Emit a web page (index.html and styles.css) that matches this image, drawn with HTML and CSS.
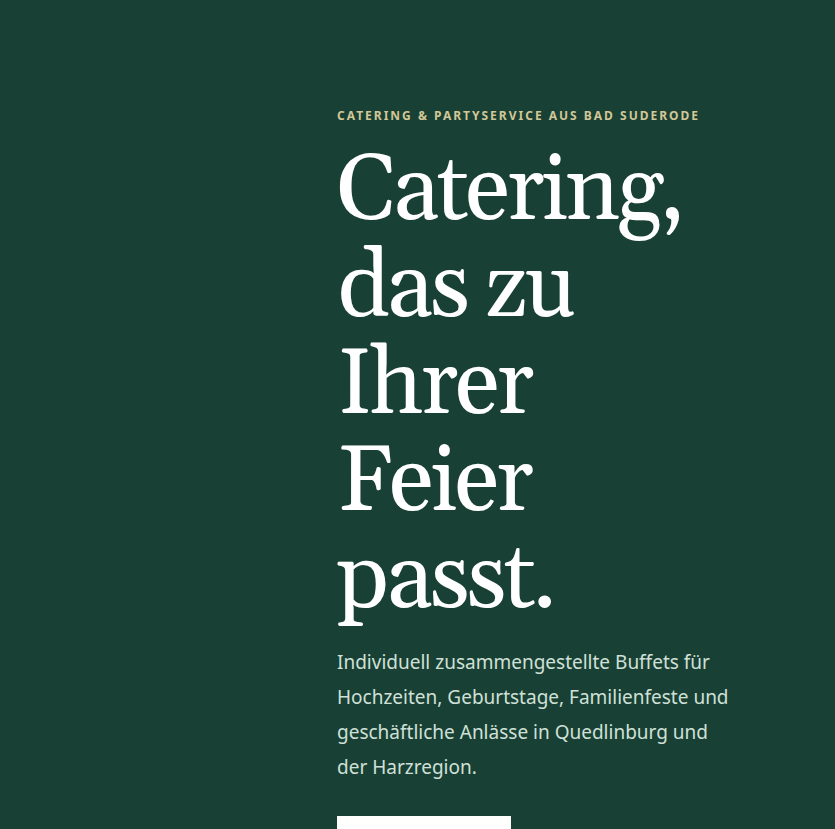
FILE: index.html
```
<!DOCTYPE html>
<html lang="de">
<head>
    <meta charset="UTF-8">
    <meta name="viewport" content="width=device-width, initial-scale=1.0">
    <title>Catering &amp; Partyservice</title>
    <link rel="stylesheet" href="styles.css">
</head>
<body>
    <main class="hero">
        <div class="hero-content">
            <p class="eyebrow">Catering &amp; Partyservice aus Bad Suderode</p>
            <h1 class="hero-title">Catering, das zu Ihrer Feier passt.</h1>
            <p class="hero-text">Individuell zusammengestellte Buffets für Hochzeiten, Geburtstage, Familienfeste und geschäftliche Anlässe in Quedlinburg und der Harzregion.</p>
            <a class="hero-button" href="#" aria-label="Anfragen"></a>
        </div>
    </main>
</body>
</html>
```

FILE: styles.css
```
* {
    margin: 0;
    padding: 0;
    box-sizing: border-box;
}

body {
    background: #184034;
    color: #ffffff;
    font-family: 'Segoe UI', 'Noto Sans', 'Open Sans', sans-serif;
}

.hero {
    min-height: 100vh;
    padding: 106px 96px 0 337px;
    overflow: hidden;
}

.eyebrow {
    color: #d3c797;
    font-size: 12px;
    font-weight: 700;
    line-height: 20px;
    letter-spacing: 2px;
    text-transform: uppercase;
    white-space: nowrap;
}

.hero-title {
    margin: 18px 0 16px;
    font-family: Georgia, Gelasio, 'Liberation Serif', serif;
    font-size: 92px;
    font-weight: 400;
    line-height: 97px;
    letter-spacing: -3px;
}

.hero-text {
    color: #d0e0d8;
    font-size: 19px;
    line-height: 35px;
}

.hero-button {
    display: block;
    width: 174px;
    height: 54px;
    margin-top: 31px;
    background: #fffffd;
}
```
